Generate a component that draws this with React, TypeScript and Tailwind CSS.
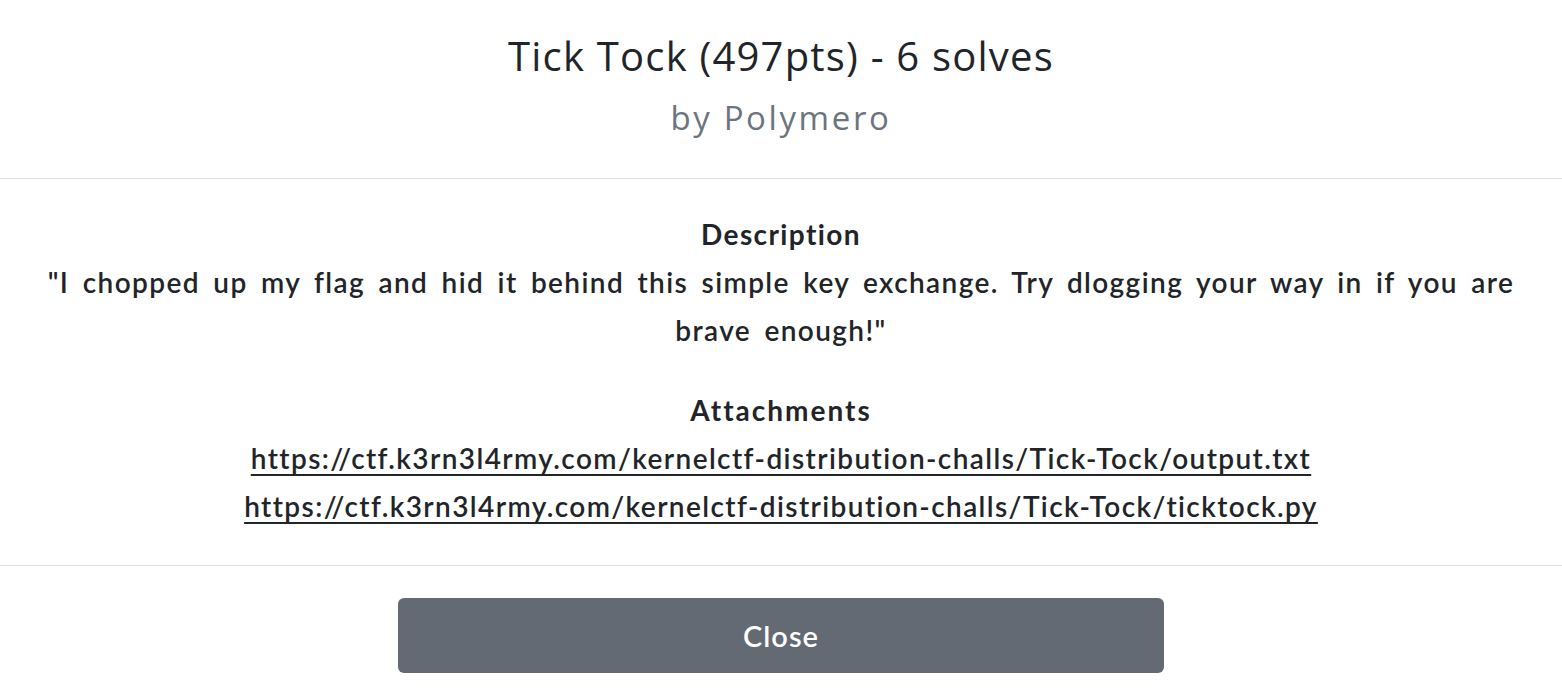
import React from "react";

const links = [
    "https://ctf.k3rn3l4rmy.com/kernelctf-distribution-challs/Tick-Tock/output.txt",
    "https://ctf.k3rn3l4rmy.com/kernelctf-distribution-challs/Tick-Tock/ticktock.py",
];

export default function App() {
    return (
        <div className="w-[1562px] h-[692px] bg-white text-[#212529] overflow-hidden">
            <header className="pt-[32px] pb-[38px] border-b border-[#dee2e6] text-center font-['Open_Sans',sans-serif]">
                <h1 className="text-[40px] leading-[48px] font-normal tracking-[1.2px]">Tick Tock (497pts) - 6 solves</h1>
                <p className="mt-[16px] text-[33px] leading-[44px] text-[#6c757d] tracking-[2.6px]">by Polymero</p>
            </header>

            <section className="pt-[31px] pb-[35px] px-[16px] border-b border-[#dee2e6] text-center font-['Lato',sans-serif] text-[28px] leading-[48px] font-semibold tracking-[1.4px] [word-spacing:5px]">
                <h2 className="font-bold">Description</h2>
                <p>
                    "I chopped up my flag and hid it behind this simple key exchange. Try dlogging your way in if you are brave enough!"
                </p>
                <h2 className="mt-[32px] font-bold tracking-[2px]">Attachments</h2>
                {links.map((link) => (
                    <div key={link}>
                        <a href={link} className="underline underline-offset-[5px] decoration-2">
                            {link}
                        </a>
                    </div>
                ))}
            </section>

            <footer className="pt-[32px] flex justify-center">
                <button className="w-[766px] h-[75px] rounded-[6px] bg-[#636a73] text-white font-['Lato',sans-serif] text-[29px] font-semibold tracking-[1px]">
                    Close
                </button>
            </footer>
        </div>
    );
}
